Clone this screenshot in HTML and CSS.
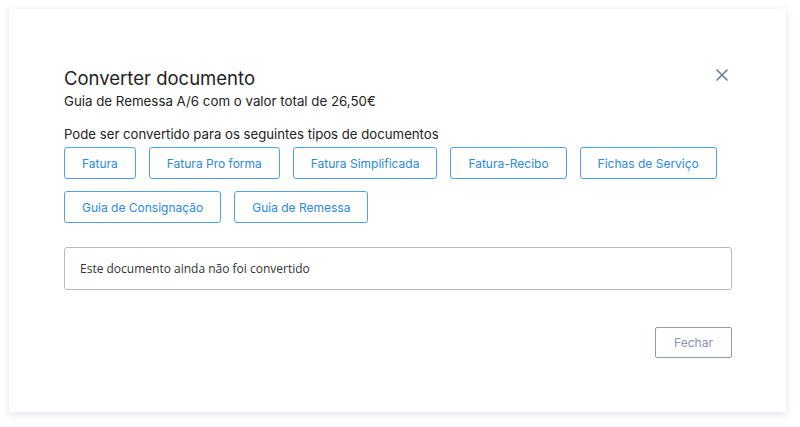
FILE: index.html
```html
<!DOCTYPE html>
<html>
<head>
    <title>Converter documento</title>
    <link rel="stylesheet" href="styles.css">
</head>
<body>
    <div class="modal">
        <div class="modal-header">
            <div>
                <h2 class="modal-title">Converter documento</h2>
                <div class="modal-subtitle">Guia de Remessa A/6 com o valor total de 26,50€</div>
            </div>
            <button class="close-btn" aria-label="Fechar">
                <svg width="12" height="12" viewBox="0 0 12 12"><path d="M1 1 L11 11 M11 1 L1 11" stroke="#6b7a99" stroke-width="1.6" stroke-linecap="round"/></svg>
            </button>
        </div>
        <p class="section-label">Pode ser convertido para os seguintes tipos de documentos</p>
        <div class="doc-types">
            <button class="doc-btn">Fatura</button>
            <button class="doc-btn">Fatura Pro forma</button>
            <button class="doc-btn">Fatura Simplificada</button>
            <button class="doc-btn">Fatura-Recibo</button>
            <button class="doc-btn">Fichas de Serviço</button>
            <button class="doc-btn">Guia de Consignação</button>
            <button class="doc-btn">Guia de Remessa</button>
        </div>
        <div class="status-box">Este documento ainda não foi convertido</div>
        <div class="modal-footer">
            <button class="btn-close">Fechar</button>
        </div>
    </div>
</body>
</html>
```

FILE: styles.css
```css
body {
    margin: 0;
    padding: 9px 14px 15px 9px;
    background-color: #ffffff;
    font-family: Inter, "Open Sans", sans-serif;
    color: #222;
}
.modal {
    width: 777px;
    height: 403px;
    box-sizing: border-box;
    padding: 57px 54px 0 55px;
    background-color: white;
    box-shadow: 0 2px 8px rgba(60, 70, 110, 0.16);
}
.modal-header {
    display: flex;
    justify-content: space-between;
    align-items: flex-start;
}
.modal-title {
    margin: 0;
    font-size: 18.5px;
    font-weight: 400;
    line-height: 24px;
    color: #222;
}
.modal-subtitle {
    margin-top: 2px;
    font-size: 13.3px;
    line-height: 18px;
    color: #222;
}
.close-btn {
    margin: 3px 4px 0 0;
    padding: 0;
    border: none;
    background: none;
    cursor: pointer;
}
.section-label {
    margin: 15px 0 0;
    font-size: 13.2px;
    line-height: 18px;
    color: #222;
}
.doc-types {
    display: flex;
    flex-wrap: wrap;
    gap: 12px 13px;
    margin-top: 4px;
    max-width: 668px;
}
.doc-btn {
    height: 32px;
    padding: 0 17px;
    background-color: white;
    border: 1px solid #4da2f0;
    border-radius: 3px;
    color: #2a8ae0;
    font-family: Inter, sans-serif;
    font-size: 12px;
    cursor: pointer;
}
.status-box {
    margin-top: 24px;
    height: 43px;
    box-sizing: border-box;
    display: flex;
    align-items: center;
    padding: 0 15px;
    border: 1px solid #b5bac6;
    border-radius: 3px;
    font-family: "Open Sans", sans-serif;
    font-size: 12px;
    color: #333;
}
.modal-footer {
    display: flex;
    justify-content: flex-end;
    margin-top: 37px;
}
.btn-close {
    width: 77px;
    height: 31px;
    background-color: white;
    border: 1px solid #8d9bb8;
    border-radius: 2px;
    color: #8893b0;
    font-family: Inter, sans-serif;
    font-size: 12px;
    cursor: pointer;
}
```
